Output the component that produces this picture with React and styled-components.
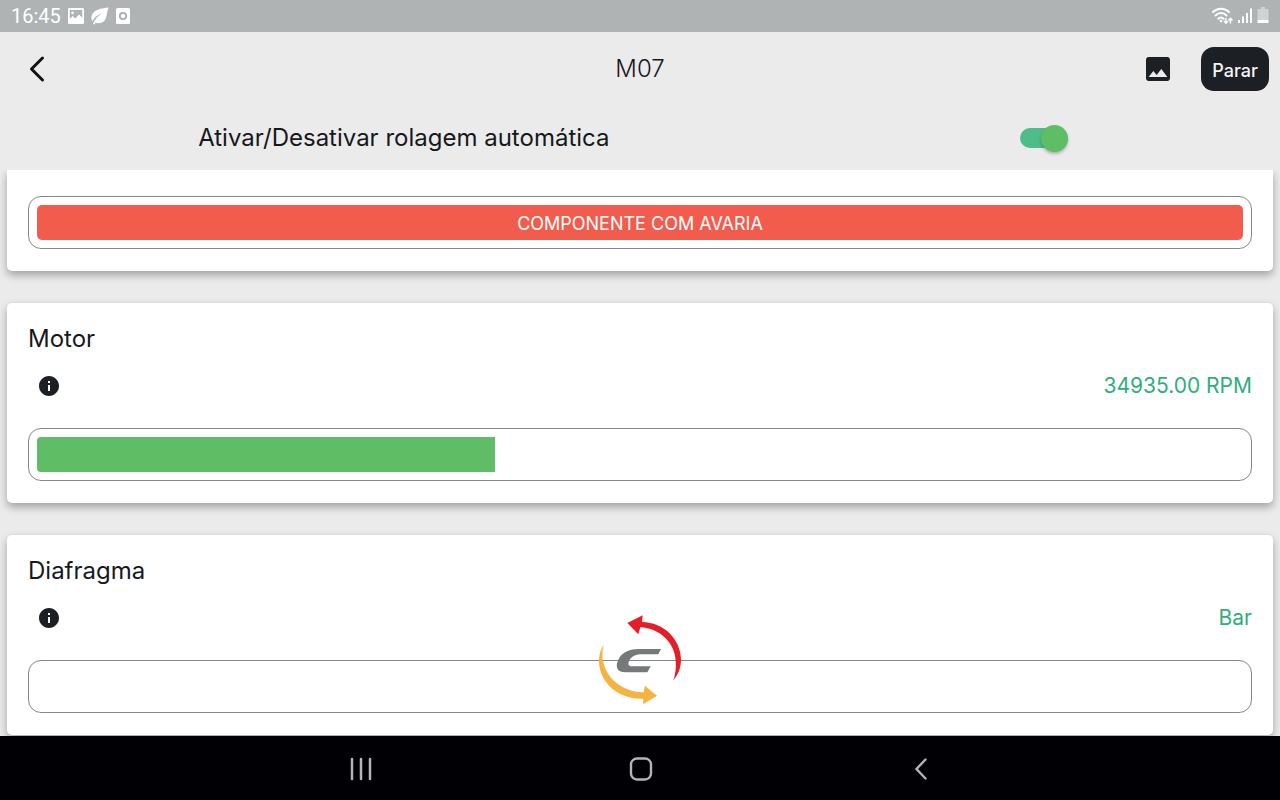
import { useState } from "react";
import styled, { createGlobalStyle } from "styled-components";
import { MdImage, MdInfo } from "react-icons/md";

const components = [
  { id: "motor", name: "Motor", value: "34935.00 RPM", level: 38 },
  { id: "diafragma", name: "Diafragma", value: "Bar", level: 0 },
];

export default function App() {
  const [autoScroll, setAutoScroll] = useState(true);

  return (
    <Screen>
      <GlobalStyle />
      <StatusBar />

      <Header>
        <HeaderSide>
          <IconButton aria-label="Voltar">
            <BackIcon />
          </IconButton>
        </HeaderSide>
        <Title>M07</Title>
        <HeaderSide $end>
          <IconButton aria-label="Imagem">
            <MdImage size={32} />
          </IconButton>
          <StopButton>Parar</StopButton>
        </HeaderSide>
      </Header>

      <ScrollOption>
        <OptionLabel htmlFor="auto-scroll">
          Ativar/Desativar rolagem automática
        </OptionLabel>
        <SwitchBox>
          <Switch
            id="auto-scroll"
            type="checkbox"
            role="switch"
            checked={autoScroll}
            onChange={(e) => setAutoScroll(e.target.checked)}
          />
        </SwitchBox>
      </ScrollOption>

      <List>
        <Card $continued>
          <Gauge>
            <Fault>COMPONENTE COM AVARIA</Fault>
          </Gauge>
        </Card>
        {components.map((item) => (
          <ComponentCard key={item.id} item={item} />
        ))}
      </List>

      <LogoOverlay>
        <Logo />
      </LogoOverlay>

      <NavBar />
    </Screen>
  );
}

function ComponentCard({ item }) {
  return (
    <Card>
      <CardTitle>{item.name}</CardTitle>
      <Reading>
        <InfoButton aria-label={`Informações: ${item.name}`}>
          <MdInfo size={24} />
        </InfoButton>
        <Value>{item.value}</Value>
      </Reading>
      <Gauge
        role="progressbar"
        aria-label={item.name}
        aria-valuenow={item.level}
      >
        <Fill style={{ width: `${item.level}%` }} />
      </Gauge>
    </Card>
  );
}

function StatusBar() {
  return (
    <Status>
      <StatusGroup>
        <Clock>16:45</Clock>
        <svg width="16" height="16" viewBox="0 0 16 16">
          <path
            fillRule="evenodd"
            fill="#fff"
            d="M1 0h14a1 1 0 0 1 1 1v14a1 1 0 0 1-1 1H1a1 1 0 0 1-1-1V1a1 1 0 0 1 1-1zm.8 2v9L4.600 8l2.600 2.400L11 6.600l3.200 3.200V2zM4.600 3.400a1.400 1.400 0 1 1 0 2.800 1.400 1.400 0 0 1 0-2.800z"
          />
        </svg>
        <svg width="18" height="18" viewBox="0 0 18 18">
          <path
            fill="#fff"
            d="M17.600.4C12 1 6.500 2 3.400 4.600 0 7.500-.4 11.400 1.400 14.200 3 10.500 6.500 8.200 11 6.200 7 9 3.800 11.800 2 17l1.600.6.900-1.900c3.700 1.300 7.800 0 9.800-3.300C16.300 9 15.600 5 17.600.4z"
          />
        </svg>
        <svg width="14" height="16" viewBox="0 0 14 16">
          <rect width="14" height="16" rx="1.500" fill="#fff" />
          <circle cx="7" cy="8" r="3.200" fill="none" stroke="#a9adae" strokeWidth="1.800" />
        </svg>
      </StatusGroup>
      <StatusGroup $end>
        <svg width="22" height="18" viewBox="0 0 22 18">
          <g fill="none" stroke="#fff" strokeWidth="2" strokeLinecap="round">
            <path d="M2 5c4.500-4.500 11.500-4.500 16 0" />
            <path d="M4.500 8.500c3-3.200 8-3.200 11 0" />
            <path d="M7.300 11.700c1.500-1.600 3.800-1.600 5.300 0" />
          </g>
          <circle cx="10" cy="14" r="1.300" fill="#fff" />
          <path
            fill="none"
            stroke="#fff"
            strokeWidth="1.400"
            d="M15 11v5m-2-2 2 2.200 2-2.200M19.500 16.500v-5m-2 2 2-2.200 2 2.200"
          />
        </svg>
        <svg width="16" height="18" viewBox="0 0 16 18">
          <path
            stroke="#fff"
            strokeWidth="2"
            d="M2 13V16M6 9.500V16M10 6V16M14 1.500V16"
          />
        </svg>
        <svg width="12" height="18" viewBox="0 0 12 18">
          <path fill="#d0d3d3" d="M4 0h4v2h3.500v12H.5V2H4z" />
          <path fill="#fff" d="M.5 13h11v3H.5z" />
        </svg>
      </StatusGroup>
    </Status>
  );
}

function BackIcon() {
  return (
    <svg width="32" height="32" viewBox="0 0 32 32">
      <path
        d="M22.500 5 11.500 16l11 11"
        fill="none"
        stroke="#101213"
        strokeWidth="3"
        strokeLinecap="round"
        strokeLinejoin="round"
      />
    </svg>
  );
}

function Logo() {
  return (
    <svg width="120" height="120" viewBox="0 0 360 360">
      <path
        fill="#e31e26"
        d="M142 69 188 46 186 66C252 67 302 118 303 178 303 202 296 222 280 241 286 222 289 205 287 182 284 128 238 84 181 82L175 103z"
      />
      <path
        fill="#f5b342"
        d="M71 134C52 205 106 275 191 277L195 257 231 287 189 313 190 296C104 300 54 236 57 178 58 161 63 146 71 134z"
      />
      <path
        fill="#75797a"
        d="M243 147H176C150 147 129 156 118 173 104 197 108 217 138 217H202L212 199H157C146 199 143 193 147 184 153 170 166 163 184 163H235z"
      />
    </svg>
  );
}

function NavBar() {
  return (
    <Nav>
      <NavButton aria-label="Recentes">
        <svg width="28" height="28" viewBox="0 0 28 28">
          <path
            d="M6 4v20M15 4v20M24 4v20"
            stroke="#b4b5b7"
            strokeWidth="2.500"
            strokeLinecap="round"
          />
        </svg>
      </NavButton>
      <NavButton aria-label="Início">
        <svg width="28" height="28" viewBox="0 0 28 28">
          <rect
            x="5"
            y="3.500"
            width="20"
            height="21"
            rx="6"
            fill="none"
            stroke="#b4b5b7"
            strokeWidth="2.400"
          />
        </svg>
      </NavButton>
      <NavButton aria-label="Voltar ao anterior">
        <svg width="28" height="28" viewBox="0 0 28 28">
          <path
            d="M19.500 4.500 10.500 14l9 9.500"
            fill="none"
            stroke="#b4b5b7"
            strokeWidth="2.400"
            strokeLinecap="round"
          />
        </svg>
      </NavButton>
    </Nav>
  );
}

const GlobalStyle = createGlobalStyle`
  *, *::before {
    box-sizing: border-box;
  }

  body {
    margin: 0;
    background: #ebebeb;
    color: #16191b;
    font-family: Inter, "Liberation Sans", sans-serif;
    font-optical-sizing: none;
  }

  button {
    border: none;
    padding: 0;
    background: none;
    color: #1c2024;
    font-family: inherit;
    cursor: pointer;
  }

  svg {
    display: block;
  }
`;

const Screen = styled.div`
  position: relative;
  display: flex;
  flex-direction: column;
  height: 100vh;
`;

const Status = styled.div`
  flex: none;
  display: flex;
  justify-content: space-between;
  align-items: center;
  height: 32px;
  padding: 0 11px;
  background: #b0b3b4;
`;

const StatusGroup = styled.div`
  display: flex;
  align-items: center;
  gap: ${({ $end }) => ($end ? "4px" : "7px")};
`;

const Clock = styled.span`
  font-family: Roboto, sans-serif;
  font-size: 20px;
  line-height: 32px;
  color: #fff;
`;

const Header = styled.header`
  flex: none;
  display: grid;
  grid-template-columns: 1fr auto 1fr;
  align-items: center;
  height: 74px;
  padding: 0 11px;
`;

const HeaderSide = styled.div`
  display: flex;
  align-items: center;
  justify-content: ${({ $end }) => ($end ? "flex-end" : "flex-start")};
  gap: 27px;
  padding-left: ${({ $end }) => ($end ? "0" : "9px")};
`;

const IconButton = styled.button`
  width: 32px;
  height: 32px;
`;

const StopButton = styled.button`
  height: 44px;
  padding: 2px 11px 0;
  border-radius: 13px;
  background: #1c2024;
  color: #f4f4f4;
  font-size: 18px;
  font-weight: 500;
`;

const Title = styled.h1`
  margin: 0;
  font-size: 24px;
  font-weight: 300;
  line-height: 32px;
`;

const ScrollOption = styled.div`
  flex: none;
  display: flex;
  justify-content: space-around;
  align-items: center;
  height: 64px;
`;

const OptionLabel = styled.label`
  font-size: 24px;
  font-weight: 400;
  line-height: 32px;
`;

const SwitchBox = styled.div`
  display: flex;
  justify-content: center;
  width: 76px;
`;

const Switch = styled.input`
  appearance: none;
  display: flex;
  align-items: center;
  width: 48px;
  height: 20px;
  margin: 0;
  border-radius: 10px;
  background: #b5b7b8;
  cursor: pointer;

  &::before {
    content: "";
    width: 27px;
    height: 27px;
    border-radius: 50%;
    background: #fafafa;
    box-shadow: 0 2px 3px rgba(0, 0, 0, 0.25);
  }

  &:checked {
    justify-content: flex-end;
    background: #4dbd89;
  }

  &:checked::before {
    background: #5ebe66;
  }
`;

const List = styled.main`
  flex: 1;
  min-height: 0;
  display: flex;
  flex-direction: column;
  gap: 32px;
  padding: 0 7px 1px;
  overflow-x: hidden;
  overflow-y: auto;
`;

const Card = styled.section`
  flex: none;
  padding: ${({ $continued }) => ($continued ? "26px 21px 22px" : "20px 21px 22px")};
  border-radius: ${({ $continued }) => ($continued ? "0 0 5px 5px" : "5px")};
  background: #fff;
  box-shadow: 0 4px 8px rgba(0, 0, 0, 0.32);
`;

const CardTitle = styled.h2`
  margin: 0;
  font-size: 24px;
  font-weight: 400;
  line-height: 32px;
`;

const Reading = styled.div`
  display: flex;
  justify-content: space-between;
  align-items: center;
  height: 62px;
  margin-bottom: 11px;
`;

const InfoButton = styled.button`
  display: flex;
  margin-left: 9px;
`;

const Value = styled.span`
  font-size: 21px;
  line-height: 32px;
  color: #2fae7b;
`;

const Gauge = styled.div`
  height: 53px;
  padding: 8px;
  border: 1px solid #85888b;
  border-radius: 13px;
`;

const Fill = styled.div`
  height: 100%;
  border-radius: 4px 0 0 4px;
  background: #5fbd66;
`;

const Fault = styled.div`
  display: flex;
  justify-content: center;
  align-items: center;
  height: 100%;
  padding-top: 2px;
  border-radius: 5px;
  background: #f25c4d;
  color: #fff;
  font-size: 18px;
`;

const LogoOverlay = styled.div`
  position: absolute;
  right: 0;
  bottom: 80px;
  left: 0;
  display: flex;
  justify-content: center;
  pointer-events: none;
`;

const Nav = styled.nav`
  flex: none;
  display: flex;
  justify-content: center;
  align-items: center;
  gap: 252px;
  height: 64px;
  padding-top: 2px;
  background: #000005;
`;

const NavButton = styled.button`
  width: 28px;
  height: 28px;
`;
